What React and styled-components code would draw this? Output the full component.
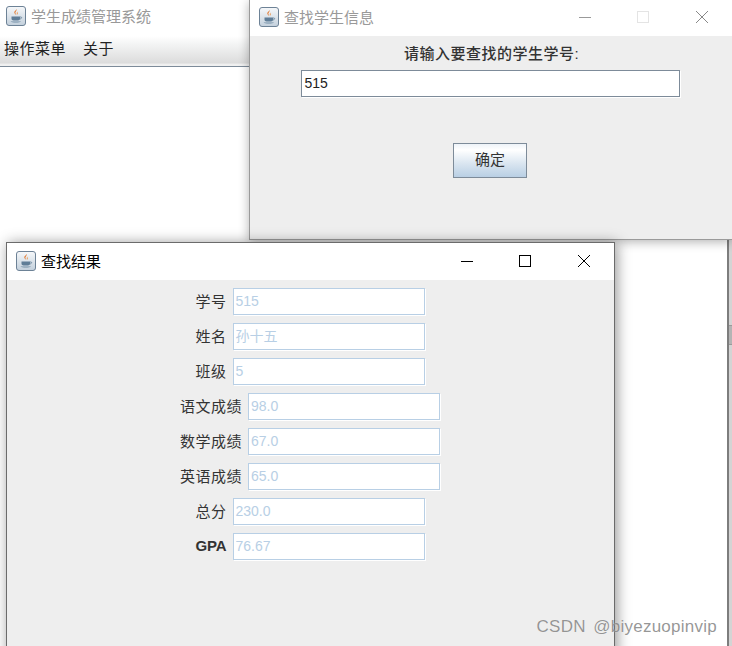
import React from "react";
import styled, { createGlobalStyle } from "styled-components";

const cjk = `"Liberation Sans", "Noto Sans CJK SC", sans-serif`;

const GlobalStyle = createGlobalStyle`
  html, body {
    margin: 0;
    padding: 0;
    background: #fff;
    font-family: ${cjk};
  }
`;

const Desktop = styled.div`
  position: relative;
  width: 732px;
  height: 646px;
  overflow: hidden;
  background: linear-gradient(90deg, #c4c4c4 0 1px, #d4d4d4 1px);
`;

const EdgeHandle = styled.div`
  position: absolute;
  left: 729px;
  top: 325px;
  width: 3px;
  height: 20px;
  box-sizing: border-box;
  background: #b4b4b4;
  border-top: 1px solid #9a9a9a;
  border-bottom: 1px solid #9a9a9a;
`;

const Frame = styled.div`
  position: absolute;
  display: flex;
  flex-direction: column;
  box-sizing: border-box;
  background: #eeeeee;
`;

const MainFrame = styled(Frame)`
  left: 0;
  top: 0;
  width: 729px;
  height: 646px;
  background: #fff;
  border-right: 2px solid #7d7d7d;
`;

const SearchFrame = styled(Frame)`
  left: 249px;
  top: 0;
  width: 483px;
  height: 240px;
  border-left: 1px solid #9a9a9a;
  border-bottom: 1px solid #9a9a9a;
  box-shadow: 0 2px 10px rgba(0, 0, 0, 0.3);
`;

const ResultFrame = styled(Frame)`
  left: 6px;
  top: 242px;
  width: 609px;
  height: 420px;
  border: 1px solid #6b6b6b;
  box-shadow: 2px 1px 13px rgba(0, 0, 0, 0.42);
`;

const TitleBar = styled.div`
  display: flex;
  align-items: center;
  flex: none;
  box-sizing: border-box;
  height: ${(p) => p.$height || 36}px;
  padding-left: ${(p) => p.$pad || 6}px;
  padding-bottom: ${(p) => p.$bottom || 3}px;
  background: #fff;
`;

const TitleText = styled.span`
  margin-left: 5px;
  font-size: 15px;
  color: ${(p) => (p.$active ? "#000" : "#999")};
`;

const WinButtons = styled.div`
  display: flex;
  margin-left: auto;
  margin-right: 1px;
`;

const WinButton = styled.div`
  display: flex;
  align-items: center;
  justify-content: center;
  width: 58.5px;
  height: 30px;
`;

const MenuBar = styled.div`
  display: flex;
  flex: none;
  align-items: center;
  gap: 17px;
  box-sizing: border-box;
  height: 31px;
  padding: 0 0 7px 4px;
  background: linear-gradient(#ffffff 0%, #f4f5f5 25%, #dcdcdc 90%, #f0f0f0 94%);
  border-bottom: 1px solid #7d8b99;
  font-size: 15px;
  letter-spacing: 0.5px;
  color: #222;
`;

const SearchBody = styled.div`
  display: flex;
  flex-direction: column;
  align-items: center;
  flex: 1;
  padding: 8px 2px 0 0;
`;

const Prompt = styled.div`
  height: 19px;
  margin-left: 3px;
  line-height: 19px;
  font-size: 15px;
  letter-spacing: 0.5px;
  font-weight: 500;
  color: #333;
`;

const SearchInput = styled.div`
  box-sizing: border-box;
  width: 379px;
  height: 27px;
  margin-top: 7px;
  padding-left: 3px;
  line-height: 25px;
  font-size: 14px;
  color: #222;
  background: #fff;
  border: 1px solid #7d8b99;
  box-shadow: 1px 1px 0 #fff;
`;

const ConfirmButton = styled.div`
  box-sizing: border-box;
  width: 74px;
  height: 35px;
  margin-top: 46px;
  line-height: 32px;
  text-align: center;
  font-size: 15px;
  color: #333;
  border: 1px solid #7d8b99;
  background: linear-gradient(#eef3f8 0%, #ffffff 18%, #d9e5f0 60%, #b9cfe4 100%);
`;

const ResultBody = styled.div`
  display: flex;
  flex-direction: column;
  flex: 1;
  padding: 8px 1px 0 0;
  gap: 8px;
`;

const FieldRow = styled.div`
  display: flex;
  justify-content: center;
  align-items: center;
  gap: 6px;
  height: 27px;
`;

const FieldLabel = styled.span`
  padding-bottom: 2px;
  font-size: 15px;
  letter-spacing: ${(p) => (p.$bold ? -0.1 : 0.5)}px;
  font-weight: ${(p) => (p.$bold ? 700 : 400)};
  color: #333;
`;

const FieldValue = styled.div`
  box-sizing: border-box;
  width: 192px;
  height: 27px;
  padding-left: 2px;
  line-height: 25px;
  font-size: 14px;
  color: #b8cfe5;
  background: #fff;
  border: 1px solid #b8cfe5;
  box-shadow: 1px 1px 0 #fff;
`;

const Watermark = styled.div`
  position: absolute;
  right: 15px;
  top: 617px;
  font-size: 17px;
  letter-spacing: 0.25px;
  word-spacing: 2.5px;
  color: rgba(110, 110, 110, 0.72);
  text-shadow: 0 0 1px rgba(255, 255, 255, 0.6);
`;

const JavaIcon = () => (
  <svg width="20" height="20" viewBox="0 0 20 20">
    <defs>
      <linearGradient id="javaBg" x1="0" y1="0" x2="0" y2="1">
        <stop offset="0" stopColor="#f6f8fa" />
        <stop offset="1" stopColor="#c3d0dc" />
      </linearGradient>
    </defs>
    <rect x="0.5" y="0.5" width="19" height="19" rx="2.5" fill="url(#javaBg)" stroke="#6d8296" />
    <path d="M10.5 3c1 1.6-1.8 2.6-1 4.4.3.7.8 1 1 1.6-1.800-1-2.800-2.400-1.800-3.800.6-.8 1.700-1.200 1.800-2.200z" fill="#e2762a" />
    <path d="M12 5.500c-.9.6-1.500 1.100-1.200 2 .2.500.4.800.2 1.300.9-.7 1-1.300.6-2-.2-.4 0-.8.4-1.300z" fill="#e9954e" />
    <path d="M5.500 10.500h8.500v2.300c0 1-1 1.700-2 1.700H7.500c-1 0-2-.7-2-1.700z" fill="#5f7d97" />
    <path d="M14 11h1c1 0 1 1.800-1.200 2" fill="none" stroke="#5f7d97" strokeWidth="0.8" />
    <path d="M4.500 15.500h10.500c-1 1.300-9.500 1.300-10.500 0z" fill="#6f8ba3" />
  </svg>
);

const MinIcon = ({ color }) => (
  <svg width="14" height="14" viewBox="0 0 14 14">
    <path d="M1 7.500h12" stroke={color} strokeWidth="1" fill="none" />
  </svg>
);

const MaxIcon = ({ color }) => (
  <svg width="14" height="14" viewBox="0 0 14 14">
    <rect x="1.500" y="1.500" width="11" height="11" stroke={color} strokeWidth="1" fill="none" />
  </svg>
);

const CloseIcon = ({ color }) => (
  <svg width="14" height="14" viewBox="0 0 14 14">
    <path d="M1 1l12 12M13 1L1 13" stroke={color} strokeWidth="1" fill="none" />
  </svg>
);

const fields = [
  { label: "学号", value: "515" },
  { label: "姓名", value: "孙十五" },
  { label: "班级", value: "5" },
  { label: "语文成绩", value: "98.0" },
  { label: "数学成绩", value: "67.0" },
  { label: "英语成绩", value: "65.0" },
  { label: "总分", value: "230.0" },
  { label: "GPA", value: "76.67", bold: true },
];

export default function App() {
  return (
    <Desktop>
      <GlobalStyle />
      <EdgeHandle />
      <MainFrame>
        <TitleBar $bottom={5}>
          <JavaIcon />
          <TitleText>学生成绩管理系统</TitleText>
        </TitleBar>
        <MenuBar>
          <span>操作菜单</span>
          <span>关于</span>
        </MenuBar>
      </MainFrame>

      <SearchFrame>
        <TitleBar $pad={9}>
          <JavaIcon />
          <TitleText>查找学生信息</TitleText>
          <WinButtons>
            <WinButton><MinIcon color="#999" /></WinButton>
            <WinButton><MaxIcon color="#e4e4e4" /></WinButton>
            <WinButton><CloseIcon color="#888" /></WinButton>
          </WinButtons>
        </TitleBar>
        <SearchBody>
          <Prompt>请输入要查找的学生学号:</Prompt>
          <SearchInput>515</SearchInput>
          <ConfirmButton>确定</ConfirmButton>
        </SearchBody>
      </SearchFrame>

      <ResultFrame>
        <TitleBar $height={37} $pad={9} $bottom={2}>
          <JavaIcon />
          <TitleText $active>查找结果</TitleText>
          <WinButtons>
            <WinButton><MinIcon color="#000" /></WinButton>
            <WinButton><MaxIcon color="#000" /></WinButton>
            <WinButton><CloseIcon color="#000" /></WinButton>
          </WinButtons>
        </TitleBar>
        <ResultBody>
          {fields.map((f) => (
            <FieldRow key={f.label}>
              <FieldLabel $bold={f.bold}>{f.label}</FieldLabel>
              <FieldValue>{f.value}</FieldValue>
            </FieldRow>
          ))}
        </ResultBody>
      </ResultFrame>

      <Watermark>CSDN @biyezuopinvip</Watermark>
    </Desktop>
  );
}
